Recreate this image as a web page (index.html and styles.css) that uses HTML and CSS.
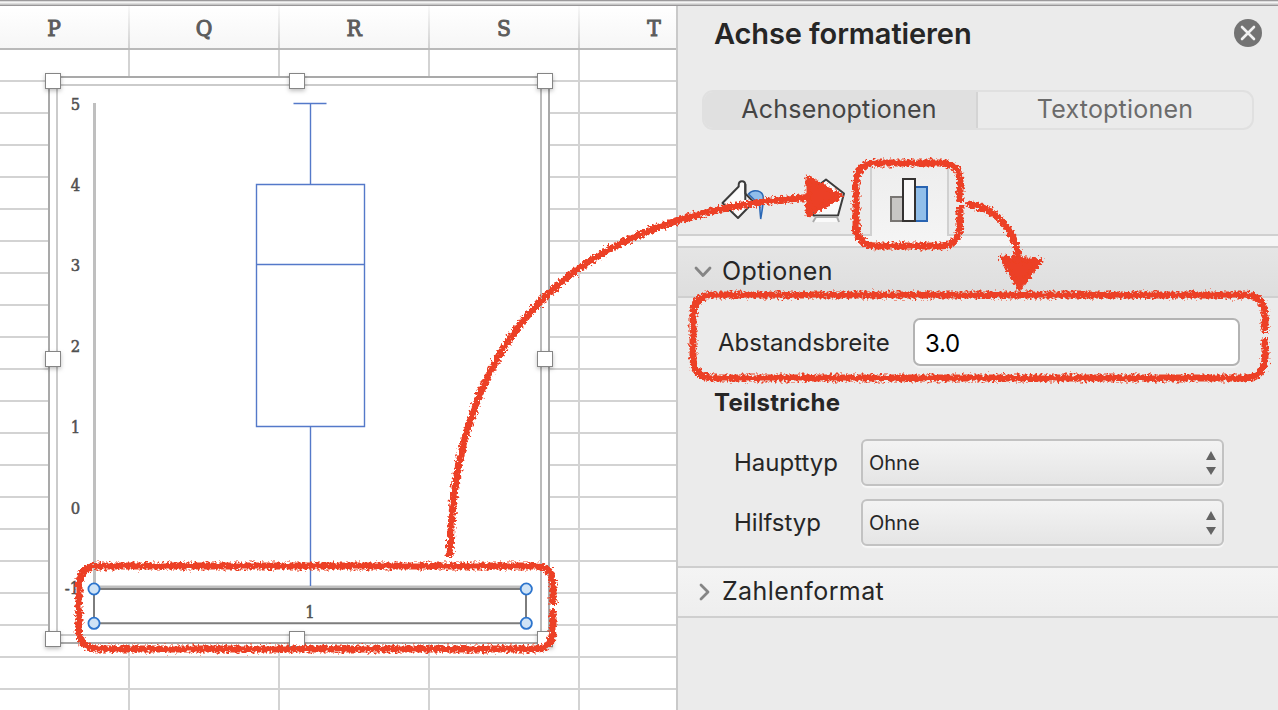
FILE: index.html
```
<!DOCTYPE html>
<html lang="de">
<head>
<meta charset="utf-8">
<title>Achse formatieren</title>
<link rel="stylesheet" href="styles.css">
</head>
<body>
<div class="window">
  <div class="window-edge"></div>
  <div class="workspace">
    <main class="sheet">
      <div class="columns">
        <div class="column">P</div><div class="column">Q</div><div class="column">R</div><div class="column">S</div><div class="column">T</div>
      </div>
      <div class="cells"></div>
      <section class="chart">
        <svg class="plot" width="502" height="568" viewBox="48 76 502 568">
          <rect class="frame-outer" x="49" y="77" width="500" height="566"/>
          <rect class="frame-inner" x="57" y="85" width="484" height="550"/>
          <path class="frame-side" d="M541 86V634"/>
          <g class="value-labels">
            <text x="75.500" y="110">5</text><text x="75.500" y="191">4</text><text x="75.500" y="271">3</text><text x="75.500" y="352">2</text><text x="75.500" y="433">1</text><text x="75.500" y="514">0</text><text x="72" y="594">-1</text><text x="310" y="618">1</text>
          </g>
          <path class="axis-line" d="M94.500 103V588M94 587H526"/>
          <path class="box" d="M293.500 103.500H326.500M310.500 103.500V184.500M256.500 184.500H364.500V426.500H256.500ZM256.500 264.500H364.500M310.500 426.500V586"/>
          <path class="selection" d="M94 589H526V623.300H94Z"/>
          <g class="handles">
            <rect x="45.500" y="73.500" width="15" height="15"/><rect x="289.500" y="73.500" width="15" height="15"/><rect x="537.500" y="73.500" width="15" height="15"/>
            <rect x="45.500" y="351.500" width="15" height="15"/><rect x="537.500" y="351.500" width="15" height="15"/>
            <rect x="45.500" y="631.500" width="15" height="15"/><rect x="289.500" y="631.500" width="15" height="15"/><rect x="537.500" y="631.500" width="15" height="15"/>
          </g>
        </svg>
      </section>
    </main>
    <aside class="panel">
      <header class="panel-head">
        <h1 class="title">Achse formatieren</h1>
        <svg class="close" width="28" height="28" viewBox="0 0 28 28"><circle cx="14" cy="14" r="14"/><path d="M8 8L20 20M20 8L8 20"/></svg>
      </header>
      <div class="segments"><div class="segment active"><span>Achsenoptionen</span></div><div class="segment"><span>Textoptionen</span></div></div>
      <div class="tabs">
        <div class="tab-rest"></div><div class="tab-active"></div><div class="tab-rest grow"></div>
        <svg class="tab-icons" width="240" height="60" viewBox="710 170 240 60">
          <path class="ink" d="M738.700 186.500L722.500 203L738 218L753.500 202L745.300 193.500V185C745.300 180 738.700 180 738.700 185Z"/>
          <path class="ink" d="M745.300 184V200"/>
          <path class="drop" d="M748.500 194C753 188.500 764 190 763.300 199C763.300 205 762 212 760.700 219C760 211 759.500 207 759.500 203C758 200 756 201 754 199.500Z"/>
          <path class="ink" d="M826 179.500L844 193.500L838 215.500H813.500L808 193.500Z"/>
          <path class="shade" d="M813 222L816 217H837L839 222"/>
          <rect class="bar-gray" x="891" y="197" width="13" height="24"/>
          <rect class="bar-blue" x="915" y="187" width="12" height="34"/>
          <rect class="bar-white" x="903" y="179" width="12" height="42"/>
        </svg>
      </div>
      <div class="section open"><svg width="18" height="14" viewBox="0 0 18 14"><path d="M2 3L9 10.500L16 3"/></svg><span>Optionen</span></div>
      <div class="options">
        <label class="gap-row"><span>Abstandsbreite</span><span class="field">3.0</span></label>
        <h2 class="subhead">Teilstriche</h2>
        <div class="type-row"><span class="type-label">Haupttyp</span><div class="select"><span>Ohne</span><svg width="12" height="26" viewBox="0 0 12 26"><path d="M6 1L11 10H1ZM6 25L11 17H1Z"/></svg></div></div>
        <div class="type-row"><span class="type-label">Hilfstyp</span><div class="select"><span>Ohne</span><svg width="12" height="26" viewBox="0 0 12 26"><path d="M6 1L11 10H1ZM6 25L11 17H1Z"/></svg></div></div>
      </div>
      <div class="section closed"><svg width="18" height="20" viewBox="0 0 18 20"><path d="M7 3L14 10L7 17"/></svg><span>Zahlenformat</span></div>
    </aside>
  </div>
  <svg class="marks" width="1278" height="710" viewBox="0 0 1278 710">
    <defs>
      <filter id="crayon" filterUnits="userSpaceOnUse" x="0" y="0" width="1278" height="710">
        <feTurbulence type="fractalNoise" baseFrequency="0.4" numOctaves="2" seed="4" result="n"/>
        <feDisplacementMap in="SourceGraphic" in2="n" scale="8" xChannelSelector="R" yChannelSelector="G"/>
      </filter>
    </defs>
    <g filter="url(#crayon)">
      <path class="stroke" d="M553 605V585Q553 566 535 566H99Q79 566 79 587V629Q79 649 99 649H535Q553 649 553 629V609"/>
      <path class="stroke" d="M960 202V182Q960 163 940 163H876Q856 163 856 184V224Q856 246 877 246H940Q960 246 960 224V206"/>
      <path class="stroke" d="M1265 333V316Q1265 295 1244 295H714Q693 295 693 316V357Q693 378 714 378H1244Q1265 378 1265 357V338"/>
      <path class="stroke" d="M450 557C452 330 580 210 815 197M967 204C1000 208 1018 235 1019 264"/>
      <path class="head" d="M808 178L840 196L808 215ZM1002 258L1040 261L1019 288Z"/>
    </g>
    <g class="points"><circle cx="94" cy="589" r="5.600"/><circle cx="526.300" cy="589" r="5.600"/><circle cx="94" cy="623.300" r="5.600"/><circle cx="526.300" cy="623.300" r="5.600"/></g>
  </svg>
</div>
</body>
</html>
```
FILE: styles.css
```
* { box-sizing: border-box; }
body { margin: 0; font-family: Inter, "Liberation Sans", sans-serif; color: #262626; overflow: hidden; }
.window { position: relative; width: 1278px; height: 710px; overflow: hidden; display: flex; flex-direction: column; background: #fff; }
.window-edge { height: 6px; background: linear-gradient(#9b999b 0 1px, #dcdcdc 1px 2px, #f4f4f4 2px 3px, #dcdcdc 3px 4px, #c4c4c4 4px 5px, #999799 5px 6px); }
.workspace { display: flex; flex: 1; min-height: 0; }
.sheet { position: relative; width: 676px; display: flex; flex-direction: column; overflow: hidden; background: #fff; }
.columns { display: flex; height: 44px; margin-left: -20px; border-bottom: 2px solid #b9b9b9; background: linear-gradient(#fff, #f6f6f6); }
.column { width: 150px; flex: none; display: flex; justify-content: center; padding: 8px 0 0; font: 22.5px/28px "DejaVu Serif Condensed", "DejaVu Serif", serif; font-stretch: condensed; -webkit-text-stroke: 1px #5c5c5c; color: #5c5c5c; border-right: 2px solid; border-image: linear-gradient(#fafafa, #cfcfcf) 1; }
.cells { flex: 1; background: repeating-linear-gradient(90deg, transparent 0 148px, #d3d3d3 148px 150px) -20px 0 / 900px 100%, repeating-linear-gradient(transparent 0 30px, #d3d3d3 30px 32px); }
.chart { position: absolute; left: 48px; top: 70px; width: 502px; height: 568px; background: #fff; }
.plot { display: block; overflow: visible; }
.frame-outer { fill: #fff; stroke: #a9a9a9; stroke-width: 2; }
.frame-inner { fill: none; stroke: #cbcbcb; stroke-width: 2; }
.frame-side { stroke: #aaa; stroke-width: 1; }
.value-labels { font: 16.5px "DejaVu Serif Condensed", "DejaVu Serif", serif; font-stretch: condensed; text-anchor: middle; fill: #505050; stroke: #505050; stroke-width: .5; }
.axis-line { fill: none; stroke: #bfbfbf; stroke-width: 3; }
.box { fill: none; stroke: #5479c9; stroke-width: 1.4; }
.selection { fill: none; stroke: #7d7d7d; stroke-width: 2; }
.points { fill: #cfe3f6; stroke: #2c74cd; stroke-width: 1.8; }
.handles { fill: #fff; stroke: #858585; stroke-width: 1; filter: drop-shadow(0 2px 2px rgba(0,0,0,.25)); }
.panel { width: 602px; border-left: 2px solid #c9c9c9; background: #ebebeb; display: flex; flex-direction: column; }
.panel-head { height: 84px; display: flex; justify-content: space-between; padding: 9px 16px 0 36px; }
.title { margin: 0; font-size: 29px; line-height: 38px; font-weight: 600; letter-spacing: -.1px; }
.close { margin-top: 4px; fill: #737373; }
.close path { stroke: #f2f2f2; stroke-width: 2.6; stroke-linecap: round; }
.segments { margin: 0 24px; height: 40px; display: flex; border-radius: 11px; border: 2px solid #e0e0e0; overflow: hidden; }
.segment { flex: 1; display: flex; justify-content: center; font-size: 25px; line-height: 34px; letter-spacing: .2px; color: #6b6b6b; }
.segment.active { flex: none; width: 274px; padding-right: 2px; background: #e0e0e0; color: #444; border-right: 2px solid #d4d4d4; }
.tabs { position: relative; height: 116px; padding-top: 31px; background: linear-gradient(#ebebeb 105px, #f5f5f5 105px); display: flex; }
.tab-rest { width: 192px; border-bottom: 2px solid #d0d0d0; height: 75px; }
.tab-rest.grow { flex: 1; }
.tab-active { width: 79px; height: 85px; position: relative; background: linear-gradient(#ededed, #f5f5f5); }
.tab-active::before { content: ""; position: absolute; inset: 0 0 10px; border: solid #d0d0d0; border-width: 0 2px; }
.tab-icons { position: absolute; left: 32px; top: 40px; fill: #fafafa; stroke-width: 2; }
.ink { stroke: #3b3b3b; stroke-linejoin: round; }
.drop { fill: #90bdea; stroke: #2a67b5; stroke-width: 1.5; }
.shade { stroke: #aaa; }
.bar-gray { fill: #c8c6c4; stroke: #797673; }
.bar-blue { fill: #91bfea; stroke: #2864b2; }
.bar-white { stroke: #343231; stroke-width: 2; }
.section { height: 52px; flex: none; border-top: 2px solid #cecece; border-bottom: 2px solid #cfcfcf; padding-left: 16px; display: flex; align-items: center; gap: 10px; font-size: 25px; letter-spacing: .4px; }
.section span { margin-top: -2px; }
.section svg { fill: none; stroke: #858585; stroke-width: 2.8; stroke-linecap: round; stroke-linejoin: round; }
.open { background: linear-gradient(#e5e5e5, #dedede); }
.closed { background: linear-gradient(#f4f4f4, #eee); }
.options { height: 268px; padding-top: 20px; }
.gap-row { height: 48px; display: flex; align-items: center; padding: 0 38px 0 40px; justify-content: space-between; font-size: 24px; }
.field { width: 327px; height: 48px; border: 2px solid #b3b3b3; border-radius: 7px; background: #fff; box-shadow: 0 2px 1px #f3f3f3; padding: 2px 10px 0; line-height: 44px; letter-spacing: -.3px; color: #000; }
.subhead { margin: 21px 0 20px 36px; font-size: 24px; line-height: 32px; font-weight: 700; letter-spacing: .25px; }
.type-row { height: 47px; margin: 0 54px 13px 56px; display: flex; justify-content: space-between; align-items: center; font-size: 24px; }
.type-label { margin-top: -1px; }
.select { width: 363px; height: 47px; border: 2px solid #c2c2c2; border-radius: 6px; background: linear-gradient(#f3f3f3, #e5e5e5); box-shadow: 0 2px 1px #f7f7f7; display: flex; align-items: center; justify-content: space-between; padding: 0 5px 0 6px; font-size: 20px; }
.select svg { fill: #646464; }
.marks { position: absolute; left: 0; top: 0; pointer-events: none; }
.stroke { fill: none; stroke: #ec4025; stroke-width: 7; stroke-linejoin: round; }
.head { fill: #ec4025; stroke: #ec4025; stroke-width: 5; stroke-linejoin: round; }
```
